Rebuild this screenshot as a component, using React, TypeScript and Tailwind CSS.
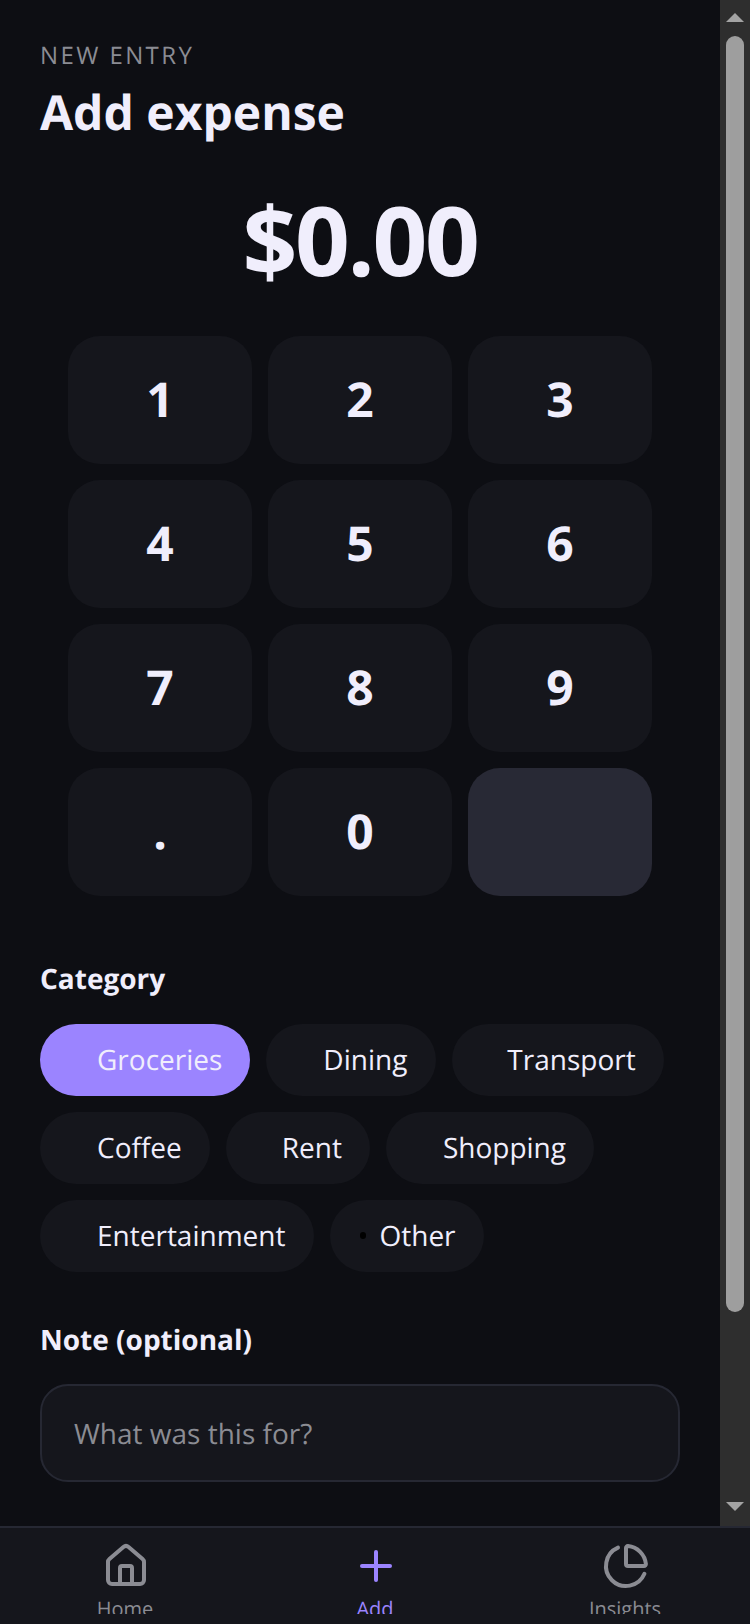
import type { ReactNode } from "react";
import { ChartPie, House, Plus } from "lucide-react";

const keys = ["1", "2", "3", "4", "5", "6", "7", "8", "9", ".", "0"];

function Chip({
  label,
  active,
  other,
  icon = "w-[17px]",
  pad = "pr-[28px]",
}: {
  label: string;
  active?: boolean;
  other?: boolean;
  icon?: string;
  pad?: string;
}) {
  return (
    <div
      className={`flex h-[72px] items-center rounded-full pb-[1px] pl-[28px] text-[28px] leading-none text-[#f0eefc] ${pad} ${
        active ? "bg-[#9b84ff]" : "bg-[#15161c]"
      }`}
    >
      {other ? (
        <span className="mr-[13px] ml-[2px] h-[7px] w-[6px] rounded-full bg-black" />
      ) : (
        <span className={`mr-[12px] ${icon}`} />
      )}
      {label}
    </div>
  );
}

function NavItem({ label, active, children }: { label: string; active?: boolean; children: ReactNode }) {
  return (
    <div className="flex h-[86px] w-[250px] flex-col items-center overflow-hidden pt-[14px]">
      {children}
      <span className={`mt-[5px] text-[20px] leading-[28px] ${active ? "text-[#9b84ff]" : "text-[#8b8c93]"}`}>{label}</span>
    </div>
  );
}

export default function App() {
  return (
    <div
      className="flex h-[1624px] w-[750px] flex-col overflow-hidden bg-[#0d0e13] [text-rendering:geometricPrecision]"
      style={{ fontFamily: '"Open Sans", sans-serif' }}
    >
      <div className="flex h-[1526px]">
        <main className="w-[720px] overflow-hidden px-[40px]">
          <p className="mt-[39px] text-[24px] leading-[34px] tracking-[2.4px] text-[#8b8c93]">NEW ENTRY</p>
          <h1 className="mt-[8px] text-[48px] leading-[64px] font-bold text-[#f0eefc]">Add expense</h1>
          <div className="mt-[30px] text-center text-[96px] leading-[130px] font-bold tracking-[-2.4px] text-[#f0eefc]">$0.00</div>
          <div className="mx-auto mt-[31px] grid w-[584px] grid-cols-3 gap-[16px]">
            {keys.map((k) => (
              <div key={k} className="flex h-[128px] items-center justify-center rounded-[32px] bg-[#15161c] text-[48px] font-bold text-[#f0eefc]">
                {k}
              </div>
            ))}
            <div className="h-[128px] rounded-[32px] bg-[#282935]" />
          </div>
          <h2 className="mt-[63px] text-[28px] leading-[40px] font-bold text-[#f0eefc]">Category</h2>
          <div className="mt-[25px] flex flex-wrap gap-[16px]">
            <Chip label="Groceries" active />
            <Chip label="Dining" pad="pr-[29px]" />
            <Chip label="Transport" icon="w-[15px]" />
            <Chip label="Coffee" />
            <Chip label="Rent" icon="w-[16px]" />
            <Chip label="Shopping" />
            <Chip label="Entertainment" pad="pr-[29px]" />
            <Chip label="Other" other />
          </div>
          <h2 className="mt-[48px] text-[28px] leading-[40px] font-bold text-[#f0eefc]">Note (optional)</h2>
          <div className="mt-[24px] flex h-[98px] items-center rounded-[28px] border-2 border-[#262833] bg-[#15161c] px-[32px] pt-[1px] text-[28px] text-[#8b8c93]">
            What was this for?
          </div>
        </main>
        <div className="flex w-[30px] flex-col items-center bg-[#2e2e2e]">
          <svg className="mt-[13px] shrink-0" width="18" height="9" viewBox="0 0 18 9"><path d="M9 0 18 9H0z" fill="#a3a3a3" /></svg>
          <div className="mt-[14px] h-[1276px] w-[18px] shrink-0 rounded-full bg-[#9e9e9e]" />
          <div className="flex-1" />
          <svg className="mb-[15px] shrink-0" width="18" height="9" viewBox="0 0 18 9"><path d="M0 0H18L9 9z" fill="#a3a3a3" /></svg>
        </div>
      </div>
      <nav className="flex h-[98px] border-t-2 border-[#262833] bg-[#15161c]">
        <NavItem label="Home"><House className="ml-[2px] shrink-0" size={48} color="#8b8c93" strokeWidth={2} /></NavItem>
        <NavItem label="Add" active><Plus className="ml-[2px] shrink-0" size={48} color="#9b84ff" strokeWidth={2} /></NavItem>
        <NavItem label="Insights"><ChartPie className="ml-[2px] shrink-0" size={48} color="#8b8c93" strokeWidth={2} /></NavItem>
      </nav>
    </div>
  );
}
